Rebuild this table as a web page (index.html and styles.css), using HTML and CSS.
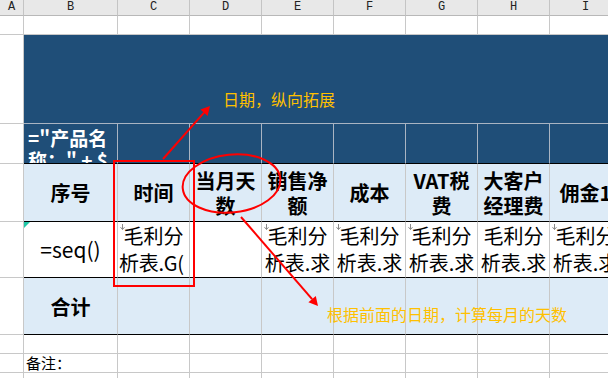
FILE: index.html
```html
<!DOCTYPE html>
<html lang="zh">
<head>
<meta charset="utf-8">
<title>毛利分析表</title>
<link rel="stylesheet" href="styles.css">
</head>
<body>
<div class="sheet">
  <div class="grid">
    <div class="c ch">A</div><div class="c ch">B</div><div class="c ch">C</div><div class="c ch">D</div><div class="c ch">E</div><div class="c ch">F</div><div class="c ch">G</div><div class="c ch">H</div><div class="c ch">I</div>

    <div class="c"></div><div class="c"></div><div class="c"></div><div class="c"></div><div class="c"></div><div class="c"></div><div class="c"></div><div class="c"></div><div class="c"></div>

    <div class="c"></div><div class="c title"></div>

    <div class="c"></div>
    <div class="c dark bname"><div class="ln">="产品名</div><div class="ln">称：" + $</div></div>
    <div class="c dark"></div><div class="c dark"></div><div class="c dark"></div><div class="c dark"></div><div class="c dark"></div><div class="c dark"></div><div class="c dark"></div>

    <div class="c"></div>
    <div class="c hd">序号</div>
    <div class="c hd">时间</div>
    <div class="c hd">当月天<br>数</div>
    <div class="c hd">销售净<br>额</div>
    <div class="c hd">成本</div>
    <div class="c hd">VAT税<br>费</div>
    <div class="c hd">大客户<br>经理费</div>
    <div class="c hd hd-clip">佣金1</div>

    <div class="c"></div>
    <div class="c dt dt-mid"><span class="err"></span>=seq()</div>
    <div class="c dt"><span class="mark"><svg width="5" height="6" viewBox="0 0 5 6"><path d="M2.5 0V5.5M0.5 3.2L2.5 5.5L4.5 3.2" stroke="#8a8a8a" fill="none" stroke-width="1"/></svg></span><div>毛利分</div><div class="ln2">析表.G(</div></div>
    <div class="c dt"></div>
    <div class="c dt"><span class="mark"><svg width="5" height="6" viewBox="0 0 5 6"><path d="M2.5 0V5.5M0.5 3.2L2.5 5.5L4.5 3.2" stroke="#8a8a8a" fill="none" stroke-width="1"/></svg></span>毛利分析表.求和(毛利分析表)</div>
    <div class="c dt"><span class="mark"><svg width="5" height="6" viewBox="0 0 5 6"><path d="M2.5 0V5.5M0.5 3.2L2.5 5.5L4.5 3.2" stroke="#8a8a8a" fill="none" stroke-width="1"/></svg></span>毛利分析表.求和(毛利分析表)</div>
    <div class="c dt"><span class="mark"><svg width="5" height="6" viewBox="0 0 5 6"><path d="M2.5 0V5.5M0.5 3.2L2.5 5.5L4.5 3.2" stroke="#8a8a8a" fill="none" stroke-width="1"/></svg></span>毛利分析表.求和(毛利分析表)</div>
    <div class="c dt">毛利分析表.求和(毛利分析表)</div>
    <div class="c dt"><span class="mark"><svg width="5" height="6" viewBox="0 0 5 6"><path d="M2.5 0V5.5M0.5 3.2L2.5 5.5L4.5 3.2" stroke="#8a8a8a" fill="none" stroke-width="1"/></svg></span>毛利分析表.求和(毛利分析表)</div>

    <div class="c"></div>
    <div class="c tt">合计</div>
    <div class="c tt"></div><div class="c tt"></div><div class="c tt"></div><div class="c tt"></div><div class="c tt"></div><div class="c tt"></div><div class="c tt"></div>

    <div class="c"></div><div class="c"></div><div class="c"></div><div class="c"></div><div class="c"></div><div class="c"></div><div class="c"></div><div class="c"></div><div class="c"></div>

    <div class="c"></div>
    <div class="c memo">备注：</div>
    <div class="c"></div><div class="c"></div><div class="c"></div><div class="c"></div><div class="c"></div><div class="c"></div><div class="c"></div>

    <div class="c"></div>
    <div class="c memo memo2">1.数据源来源</div>
    <div class="c"></div><div class="c"></div><div class="c"></div><div class="c"></div><div class="c"></div><div class="c"></div><div class="c"></div>
  </div>

  <svg class="overlay" width="608" height="378" viewBox="0 0 608 378">
    <rect x="114" y="161" width="80" height="125" fill="none" stroke="#ff0000" stroke-width="2"/>
    <ellipse cx="231.5" cy="183.5" rx="49" ry="29" transform="rotate(-6 231.5 183.5)" fill="none" stroke="#ff0000" stroke-width="2"/>
    <line x1="163" y1="159" x2="204" y2="112.7" stroke="#ff0000" stroke-width="2"/>
    <polygon points="210,106 207.6,116 200.4,109.6" fill="#ff0000"/>
    <line x1="241" y1="217" x2="312.1" y2="299.2" stroke="#ff0000" stroke-width="2"/>
    <polygon points="318,306 308.4,302.3 315.8,296" fill="#ff0000"/>
  </svg>
  <div class="note note1">日期，纵向拓展</div>
  <div class="note note2">根据前面的日期，计算每月的天数</div>
</div>
</body>
</html>
```
FILE: styles.css
```css
html, body {
  margin: 0;
  padding: 0;
  background: #ffffff;
}

.sheet {
  position: relative;
  width: 608px;
  height: 378px;
  overflow: hidden;
  font-family: "Noto Sans CJK SC", "Noto Sans", sans-serif;
  color: #000;
}

.grid {
  display: grid;
  grid-template-columns: 24px 94px repeat(7, 72px);
  grid-template-rows: 16px 19px 89px 40px 58px 56px 57px 19px 19px 19px;
  width: 621px;
}

.c {
  box-sizing: border-box;
  border-right: 1px solid #c8c8c8;
  border-bottom: 1px solid #c8c8c8;
  background: #ffffff;
  overflow: hidden;
  min-width: 0;
}

.ch {
  background: #e8e8e8;
  border-bottom-color: #b8b8b8;
  border-right-color: #c4c4c4;
  font-family: "Liberation Mono", "DejaVu Sans Mono", monospace;
  font-size: 12px;
  line-height: 15px;
  text-align: center;
  color: #222;
}

.title {
  grid-column: span 8;
  background: #1f4e78;
  border-right: none;
  border-bottom-color: #a9b4c2;
}

.dark {
  background: #1f4e78;
  border-right-color: #a9b4c2;
  border-bottom-color: #000;
}

.bname {
  color: #ffffff;
  font-weight: bold;
  font-size: 19px;
  line-height: 22px;
  padding: 3px 0 0 4px;
}

.ln {
  white-space: nowrap;
}

.hd {
  background: #ddebf7;
  border-bottom-color: #000;
  display: flex;
  flex-direction: column;
  align-items: center;
  justify-content: center;
  text-align: center;
  font-weight: bold;
  font-size: 20px;
  line-height: 25px;
  white-space: nowrap;
}

.dt {
  position: relative;
  border-bottom-color: #000;
  font-size: 20px;
  line-height: 27px;
  text-align: center;
  word-break: break-all;
}

.ln2 {
  white-space: nowrap;
  text-align: left;
  padding-left: 1px;
  letter-spacing: -0.3px;
}

.dt-mid {
  display: flex;
  align-items: center;
  justify-content: center;
  font-size: 21px;
}

.err {
  position: absolute;
  left: 0;
  top: 0;
  width: 0;
  height: 0;
  border-top: 6px solid #20c8a8;
  border-right: 6px solid transparent;
}

.mark {
  position: absolute;
  left: 2px;
  top: 0;
  width: 5px;
  height: 6px;
  line-height: 0;
}

.tt {
  background: #ddebf7;
  border-bottom-color: #000;
  display: flex;
  align-items: center;
  justify-content: center;
  font-weight: bold;
  font-size: 20px;
}

.memo {
  font-size: 15px;
  line-height: 18px;
  padding-left: 2px;
  white-space: nowrap;
}

.memo2 {
  padding-top: 3px;
}

.overlay {
  position: absolute;
  left: 0;
  top: 0;
  pointer-events: none;
}

.note {
  position: absolute;
  color: #ffc000;
  font-size: 16px;
  line-height: 18px;
  white-space: nowrap;
}

.note1 {
  left: 223px;
  top: 90px;
}

.note2 {
  left: 327px;
  top: 305px;
}
```
